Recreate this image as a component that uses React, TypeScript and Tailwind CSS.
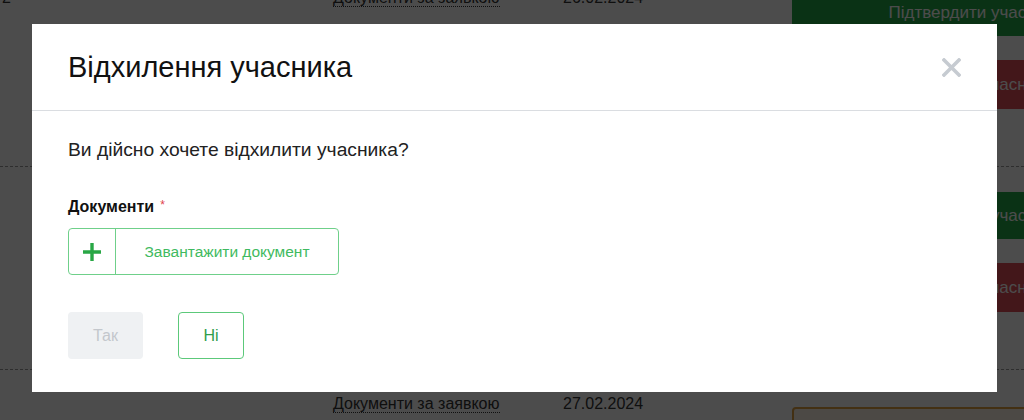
import React from 'react';

const rows = [
    { num: '2', date: '26.02.2024', actions: 'pending' },
    { num: '', date: '26.02.2024', actions: 'pending' },
    { num: '', date: '27.02.2024', actions: 'other' },
];

function CloseIcon() {
    return (
        <svg width="19" height="19" viewBox="0 0 19 19" fill="none">
            <path d="M2 2L17 17M17 2L2 17" stroke="#c6cbd1" strokeWidth="3.6" strokeLinecap="square" />
        </svg>
    );
}

function PlusIcon() {
    return (
        <svg width="18" height="18" viewBox="0 0 18 18" fill="none">
            <path d="M9 0V18M0 9H18" stroke="#28a745" strokeWidth="3.4" />
        </svg>
    );
}

export default function App() {
    return (
        <div className="relative w-[1024px] h-[420px] overflow-hidden bg-white font-['Liberation_Sans',Arial,sans-serif]">
            {/* page behind the modal */}
            <div className="mt-[-36px] text-[16px] text-[#333]">
                {rows.map((row, i) => (
                    <div key={i} className="flex h-[203px] border-b border-dashed border-[#999] pt-[22px]">
                        <div className="w-[333px] shrink-0 pl-[2px]">{row.num}</div>
                        <div className="w-[230px] shrink-0">
                            <span className="border-b border-dotted border-[#333]">Документи за заявкою</span>
                        </div>
                        <div className="w-[229px] shrink-0">{row.date}</div>
                        <div className="w-[367px] shrink-0 flex flex-col gap-[24px] pt-[3px]">
                            {row.actions === 'pending' ? (
                                <>
                                    <div className="h-[47px] bg-[#22a848] text-white text-[17px] flex items-center justify-center">Підтвердити учасника</div>
                                    <div className="h-[49px] bg-[#e04d57] text-white text-[17px] flex items-center justify-center">Відхилити учасника</div>
                                </>
                            ) : (
                                <div className="h-[47px] mt-[12px] border-2 border-[#e0a040] rounded-[4px] bg-[#fdf6e8]" />
                            )}
                        </div>
                    </div>
                ))}
            </div>

            {/* overlay + modal */}
            <div className="absolute inset-0 bg-black/70 pt-[24px] pl-[32px]">
                <div className="w-[965px] h-[368px] bg-white">
                    <div className="h-[87px] border-b border-[#dadde1] flex items-center justify-between pl-[36px] pr-[36px] pt-[1px]">
                        <h2 className="text-[29px] text-[#111]">Відхилення учасника</h2>
                        <button className="mt-[-1px]"><CloseIcon /></button>
                    </div>
                    <div className="px-[36px] pt-[27px]">
                        <p className="text-[19.25px] text-[#222] leading-[24px]">Ви дійсно хочете відхилити учасника?</p>
                        <div className="mt-[36px] flex items-start text-[16px] font-bold text-[#111] leading-[18px]">
                            Документи
                            <span className="ml-[6px] text-[#e0424d] text-[12px] font-normal leading-[14px]">*</span>
                        </div>
                        <div className="mt-[12px] w-[271px] h-[47px] border border-[#6fd08a] rounded-[4px] flex">
                            <div className="w-[47px] border-r border-[#6fd08a] flex items-center justify-center">
                                <PlusIcon />
                            </div>
                            <div className="flex-1 flex items-center justify-center text-[15.5px] text-[#3fba60]">Завантажити документ</div>
                        </div>
                        <div className="mt-[37px] flex gap-[35px]">
                            <button className="w-[75px] h-[47px] rounded-[4px] bg-[#eff1f3] text-[#c3c7cc] text-[16px]">Так</button>
                            <button className="w-[66px] h-[47px] rounded-[4px] border border-[#5cc97a] text-[#2f9e4a] text-[16px]">Ні</button>
                        </div>
                    </div>
                </div>
            </div>
        </div>
    );
}
